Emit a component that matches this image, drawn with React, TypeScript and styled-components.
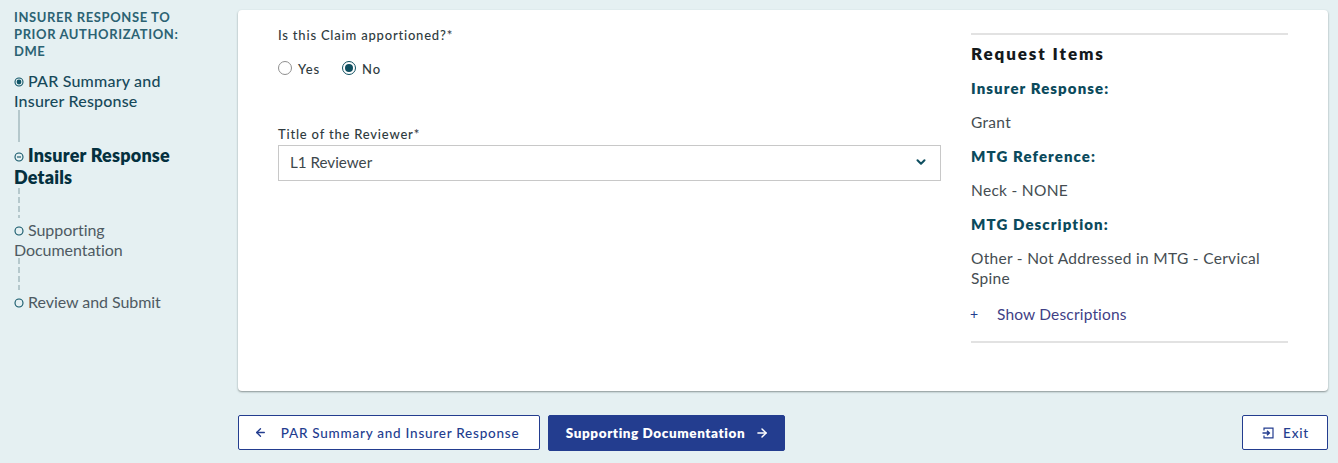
import React from "react";
import styled, { createGlobalStyle } from "styled-components";
import { ArrowLeft, ArrowRight, ChevronDown } from "lucide-react";

const Global = createGlobalStyle`
  html, body { margin: 0; padding: 0; background: #e5f0f2; }
  body { font-family: Lato, "Open Sans", "Liberation Sans", sans-serif; }
  * { box-sizing: border-box; }
`;

const Page = styled.div`
  width: 1338px;
  height: 463px;
  overflow: hidden;
  display: grid;
  grid-template-columns: 238px 1090px;
  background: #e5f0f2;
`;

const Sidebar = styled.nav`
  padding: 9px 0 0 14px;
  display: flex;
  flex-direction: column;
`;

const SideTitle = styled.div`
  width: 180px;
  font-size: 13px;
  line-height: 17px;
  font-weight: 700;
  letter-spacing: 0.6px;
  color: #2b6273;
  text-transform: uppercase;
  margin-bottom: 11px;
`;

const Step = styled.div<{ $state: "done" | "current" | "todo" }>`
  width: 172px;
  font-size: ${(p) => (p.$state === "current" ? "18px" : "16px")};
  line-height: ${(p) => (p.$state === "current" ? "22px" : "20px")};
  font-weight: ${(p) => (p.$state === "current" ? 800 : p.$state === "done" ? 500 : 400)};
  letter-spacing: ${(p) => (p.$state === "todo" ? "-0.05px" : "0.2px")};
  color: ${(p) => (p.$state === "current" ? "#04303f" : p.$state === "done" ? "#17495a" : "#4e5a62")};
`;

const StepIcon = styled.svg`
  width: 10px;
  height: 10px;
  margin: 0 4px 0 0;
  vertical-align: 0;
`;

const Connector = styled.div<{ $dashed?: boolean; $height: number; $gap?: number }>`
  width: 2px;
  height: ${(p) => p.$height}px;
  margin: ${(p) => p.$gap ?? 0}px 0 2px 4px;
  background: ${(p) =>
    p.$dashed
      ? "repeating-linear-gradient(to bottom, #b5c8cc 0 6px, transparent 6px 9px)"
      : "#b5c8cc"};
`;

const Main = styled.main`
  display: flex;
  flex-direction: column;
  padding-top: 10px;
`;

const Card = styled.section`
  width: 1090px;
  height: 381px;
  background: #fff;
  border-radius: 4px;
  box-shadow: 0 1px 2px rgba(60, 70, 70, 0.55);
  padding: 0 40px;
  display: grid;
  grid-template-columns: 663px 317px;
  column-gap: 30px;
`;

const FormColumn = styled.div`
  padding-top: 17px;
  display: flex;
  flex-direction: column;
`;

const FieldLabel = styled.label`
  display: block;
  font-size: 13px;
  line-height: 16px;
  font-weight: 500;
  letter-spacing: 0.8px;
  color: #2f3b40;
`;

const RadioRow = styled.div`
  display: flex;
  gap: 22px;
  margin-top: 17px;
  height: 18px;
  align-items: center;
`;

const RadioOption = styled.span`
  display: inline-flex;
  align-items: center;
  gap: 6px;
  font-size: 13px;
  font-weight: 500;
  letter-spacing: 0.9px;
  color: #2f3b40;
`;

const RadioMark = styled.span<{ $checked?: boolean }>`
  width: 14px;
  height: 14px;
  border-radius: 50%;
  background: #fff;
  border: 1px solid ${(p) => (p.$checked ? "#0f4f60" : "#8f8f8f")};
  display: inline-flex;
  align-items: center;
  justify-content: center;
  position: relative;
  top: -1px;
  &::after {
    content: "";
    width: 8px;
    height: 8px;
    border-radius: 50%;
    background: ${(p) => (p.$checked ? "#0f4f60" : "transparent")};
  }
`;

const ReviewerField = styled.div`
  margin-top: 48px;
`;

const SelectBox = styled.div`
  margin-top: 3px;
  height: 36px;
  border: 1px solid #c8c8c8;
  padding: 0 12px 2px 11px;
  display: flex;
  align-items: center;
  justify-content: space-between;
  font-size: 15.2px;
  color: #3d474c;
  svg {
    color: #0f4f60;
  }
`;

const Summary = styled.aside`
  margin-top: 23px;
  height: 310px;
  border-top: 2px solid #e2e2e2;
  border-bottom: 2px solid #e2e2e2;
  padding-top: 8px;
`;

const SummaryTitle = styled.h2`
  margin: 0 0 13px;
  font-size: 17px;
  line-height: 22px;
  font-weight: 800;
  letter-spacing: 1.9px;
  color: #14191c;
`;

const ItemLabel = styled.div`
  font-size: 15px;
  line-height: 20px;
  font-weight: 800;
  letter-spacing: 1.1px;
  color: #0b4a5c;
  margin-bottom: 14px;
`;

const ItemValue = styled.div`
  font-size: 15.5px;
  line-height: 20px;
  letter-spacing: 0.3px;
  color: #454d52;
  margin-bottom: 14px;
`;

const ShowMore = styled.div`
  display: flex;
  align-items: center;
  margin-top: 16px;
  font-size: 15.5px;
  line-height: 20px;
  letter-spacing: 0.17px;
  color: #3f3f86;
`;

const PlusMark = styled.span`
  width: 27px;
  margin-left: -1px;
  color: #223d8f;
  font-size: 14px;
`;

const Footer = styled.footer`
  margin-top: 24px;
  width: 1090px;
  display: flex;
  align-items: flex-start;
  gap: 8px;
`;

const Button = styled.button<{ $primary?: boolean; $w: number; $pad?: string }>`
  width: ${(p) => p.$w}px;
  height: ${(p) => (p.$primary ? 36 : 35)}px;
  border-radius: 2px;
  border: 1px solid #233d8f;
  background: ${(p) => (p.$primary ? "#233d8f" : "#fff")};
  color: ${(p) => (p.$primary ? "#fff" : "#233d8f")};
  font-family: inherit;
  font-size: 13.5px;
  font-weight: ${(p) => (p.$primary ? 800 : 500)};
  letter-spacing: ${(p) => (p.$primary ? "0.58px" : "0.76px")};
  display: inline-flex;
  align-items: center;
  justify-content: center;
  padding: ${(p) => p.$pad ?? "0"};
`;

const LeftIcon = styled.span<{ $gap: number }>`
  display: inline-flex;
  margin-right: ${(p) => p.$gap}px;
`;

const RightIcon = styled.span`
  display: inline-flex;
  margin-left: 10px;
`;

const ExitButton = styled(Button)`
  margin-left: auto;
`;

const Dot = ({ kind }: { kind: "filled" | "minus" | "empty" }) => (
  <StepIcon viewBox="0 0 10 10">
    <circle cx="5" cy="5" r="4" fill="none" stroke="#0f5466" strokeWidth="1.1" />
    {kind === "filled" && <circle cx="5" cy="5" r="2.4" fill="#0f5466" />}
    {kind === "minus" && <path d="M3 5h4" stroke="#0f5466" strokeWidth="1.1" />}
  </StepIcon>
);

const ExitIcon = () => (
  <svg width="12" height="12" viewBox="0 0 12 12" fill="none" stroke="#233d8f" strokeWidth="1.2">
    <path d="M2 3.5V1.2h9v9.6H2V8.5" />
    <path d="M0.5 6h6.5M5 3.8 7.3 6 5 8.2" strokeWidth="1.5" />
  </svg>
);

export default function App() {
  return (
    <Page>
      <Global />
      <Sidebar>
        <SideTitle>Insurer Response to Prior Authorization: DME</SideTitle>
        <Step $state="done">
          <Dot kind="filled" />
          PAR Summary and Insurer Response
        </Step>
        <Connector $height={32} $gap={-1} />
        <Step $state="current">
          <Dot kind="minus" />
          Insurer Response Details
        </Step>
        <Connector $dashed $height={30} />
        <Step $state="todo">
          <Dot kind="empty" />
          Supporting Documentation
        </Step>
        <Connector $dashed $height={32} $gap={-2} />
        <Step $state="todo">
          <Dot kind="empty" />
          Review and Submit
        </Step>
      </Sidebar>
      <Main>
        <Card>
          <FormColumn>
            <FieldLabel>Is this Claim apportioned?*</FieldLabel>
            <RadioRow>
              <RadioOption>
                <RadioMark />
                Yes
              </RadioOption>
              <RadioOption>
                <RadioMark $checked />
                No
              </RadioOption>
            </RadioRow>
            <ReviewerField>
              <FieldLabel>Title of the Reviewer*</FieldLabel>
              <SelectBox>
                L1 Reviewer
                <ChevronDown size={14} strokeWidth={3.5} />
              </SelectBox>
            </ReviewerField>
          </FormColumn>
          <Summary>
            <SummaryTitle>Request Items</SummaryTitle>
            <ItemLabel>Insurer Response:</ItemLabel>
            <ItemValue>Grant</ItemValue>
            <ItemLabel>MTG Reference:</ItemLabel>
            <ItemValue>Neck - NONE</ItemValue>
            <ItemLabel>MTG Description:</ItemLabel>
            <ItemValue>Other - Not Addressed in MTG - Cervical Spine</ItemValue>
            <ShowMore>
              <PlusMark>+</PlusMark>
              Show Descriptions
            </ShowMore>
          </Summary>
        </Card>
        <Footer>
          <Button $w={302} $pad="0 5px 0 0">
            <LeftIcon $gap={14}>
              <ArrowLeft size={13} strokeWidth={2.5} />
            </LeftIcon>
            PAR Summary and Insurer Response
          </Button>
          <Button $primary $w={237} $pad="0 0 0 2px">
            Supporting Documentation
            <RightIcon>
              <ArrowRight size={14} strokeWidth={2.5} />
            </RightIcon>
          </Button>
          <ExitButton $w={86} $pad="0 0 0 1px">
            <LeftIcon $gap={9}>
              <ExitIcon />
            </LeftIcon>
            Exit
          </ExitButton>
        </Footer>
      </Main>
    </Page>
  );
}
